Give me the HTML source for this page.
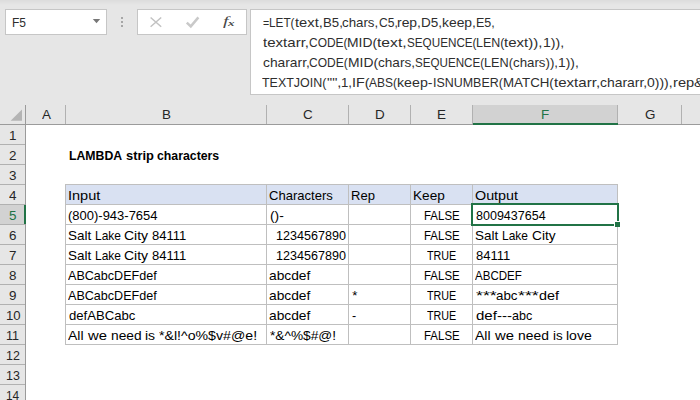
<!DOCTYPE html>
<html><head><meta charset="utf-8"><title>LAMBDA strip characters</title>
<style>
html,body{margin:0;padding:0}
body{width:700px;height:400px;overflow:hidden;background:#fff;position:relative;font-family:"Liberation Sans",sans-serif}
.a{position:absolute}
.t{position:absolute;white-space:pre;line-height:19px;height:19px;transform-origin:0 0;display:block}
.b{font-weight:bold}
.box{background:#fff;border:1px solid #c6c6c6;box-sizing:border-box}
.vl{position:absolute;width:1px;background:#bfbfbf}
.hl{position:absolute;height:1px;background:#bfbfbf}
</style></head>
<body>
<div class='a' style='left:0;top:0;width:700px;height:125px;background:#e6e6e6'></div>
<div class='a' style='left:0;top:0;width:700px;height:5px;background:linear-gradient(#dcdcdc,#e6e6e6)'></div>
<div class='a box' style='left:5px;top:9px;width:102px;height:26px'></div>
<svg class='a' style='left:92px;top:18px' width='10' height='7' viewBox='0 0 10 7'><path d='M0.8 1 L8.2 1 L4.5 5.2 Z' fill='#777'/></svg>
<div class='a' style='left:121px;top:17px;width:2px;height:2px;background:#a6a6a6'></div>
<div class='a' style='left:121px;top:21px;width:2px;height:2px;background:#a6a6a6'></div>
<div class='a' style='left:121px;top:25px;width:2px;height:2px;background:#a6a6a6'></div>
<div class='a box' style='left:137px;top:9px;width:110px;height:26px'></div>
<svg class='a' style='left:148px;top:14px' width='90' height='18' viewBox='148 14 90 18'><path d='M150.6 17.5 L161.2 26.7 M161.2 17.5 L150.6 26.7' stroke='#c2c2c2' stroke-width='1.5' fill='none'/><path d='M186.8 22.6 L190.8 26.4 L198.4 17.4' stroke='#c9c9c9' stroke-width='2.5' fill='none'/></svg>
<span class='a' style='left:222.5px;top:11.2px;font-family:"Liberation Serif",serif;font-style:italic;font-size:12.5px;line-height:20px;color:#474747;transform:scaleX(1.6);transform-origin:0 0'>f</span>
<span class='a' style='left:227.6px;top:13.4px;font-family:"Liberation Serif",serif;font-style:italic;font-weight:bold;font-size:9px;line-height:20px;color:#4c4c4c;transform:scaleX(1.45);transform-origin:0 0'>x</span>
<div class='a' style='left:250px;top:9px;width:450px;height:86px;background:#fff;border:1px solid #c6c6c6;border-right:0;box-sizing:border-box'></div>
<div class='a' style='left:0;top:125px;width:25px;height:275px;background:#e6e6e6'></div>
<div class='a' style='left:473px;top:105px;width:145px;height:20px;background:#d2d2d2'></div>
<div class='a' style='left:0;top:205px;width:25px;height:19px;background:#d2d2d2'></div>
<div class='a' style='left:0;top:124px;width:700px;height:1px;background:#9b9b9b'></div>
<div class='a' style='left:25px;top:105px;width:1px;height:295px;background:#9b9b9b'></div>
<div class='a' style='left:65px;top:105px;width:1px;height:19px;background:#b1b1b1'></div>
<div class='a' style='left:266px;top:105px;width:1px;height:19px;background:#b1b1b1'></div>
<div class='a' style='left:348px;top:105px;width:1px;height:19px;background:#b1b1b1'></div>
<div class='a' style='left:410px;top:105px;width:1px;height:19px;background:#b1b1b1'></div>
<div class='a' style='left:472px;top:105px;width:1px;height:19px;background:#b1b1b1'></div>
<div class='a' style='left:617px;top:105px;width:1px;height:19px;background:#b1b1b1'></div>
<div class='a' style='left:681px;top:105px;width:1px;height:19px;background:#b1b1b1'></div>
<div class='a' style='left:0;top:144px;width:25px;height:1px;background:#b1b1b1'></div>
<div class='a' style='left:0;top:164px;width:25px;height:1px;background:#b1b1b1'></div>
<div class='a' style='left:0;top:184px;width:25px;height:1px;background:#b1b1b1'></div>
<div class='a' style='left:0;top:204px;width:25px;height:1px;background:#b1b1b1'></div>
<div class='a' style='left:0;top:224px;width:25px;height:1px;background:#b1b1b1'></div>
<div class='a' style='left:0;top:244px;width:25px;height:1px;background:#b1b1b1'></div>
<div class='a' style='left:0;top:264px;width:25px;height:1px;background:#b1b1b1'></div>
<div class='a' style='left:0;top:284px;width:25px;height:1px;background:#b1b1b1'></div>
<div class='a' style='left:0;top:304px;width:25px;height:1px;background:#b1b1b1'></div>
<div class='a' style='left:0;top:324px;width:25px;height:1px;background:#b1b1b1'></div>
<div class='a' style='left:0;top:344px;width:25px;height:1px;background:#b1b1b1'></div>
<div class='a' style='left:0;top:364px;width:25px;height:1px;background:#b1b1b1'></div>
<div class='a' style='left:0;top:384px;width:25px;height:1px;background:#b1b1b1'></div>
<div class='a' style='left:0;top:404px;width:25px;height:1px;background:#b1b1b1'></div>
<svg class='a' style='left:9px;top:108px' width='14' height='14' viewBox='9 108 14 14'><path d='M22 109.4 L22 120.7 L10.6 120.7 Z' fill='#b4b4b4'/></svg>
<div class='a' style='left:473px;top:123px;width:145px;height:2px;background:#217346'></div>
<div class='a' style='left:24px;top:205px;width:2px;height:19px;background:#217346'></div>
<div class='a' style='left:66px;top:185px;width:551px;height:19px;background:#d9e1f2'></div>
<div class='vl' style='left:65px;top:184px;height:161px'></div>
<div class='vl' style='left:266px;top:184px;height:161px'></div>
<div class='vl' style='left:348px;top:184px;height:161px'></div>
<div class='vl' style='left:410px;top:184px;height:161px'></div>
<div class='vl' style='left:472px;top:184px;height:161px'></div>
<div class='vl' style='left:617px;top:184px;height:161px'></div>
<div class='hl' style='left:65px;top:184px;width:553px'></div>
<div class='hl' style='left:65px;top:204px;width:553px'></div>
<div class='hl' style='left:65px;top:224px;width:553px'></div>
<div class='hl' style='left:65px;top:244px;width:553px'></div>
<div class='hl' style='left:65px;top:264px;width:553px'></div>
<div class='hl' style='left:65px;top:284px;width:553px'></div>
<div class='hl' style='left:65px;top:304px;width:553px'></div>
<div class='hl' style='left:65px;top:324px;width:553px'></div>
<div class='hl' style='left:65px;top:344px;width:553px'></div>
<div class='a' style='left:471px;top:203px;width:148px;height:23px;border:2px solid #217346;box-sizing:border-box'></div>
<div class='a' style='left:614px;top:221px;width:6px;height:6px;background:#fff'></div>
<div class='a' style='left:615px;top:222px;width:5px;height:5px;background:#217346'></div>
<span class='t' style='left:41.70px;top:105px;font-size:13.4px;color:#262626;transform:scaleX(1.002)'>A</span>
<span class='t' style='left:161.70px;top:105px;font-size:13.4px;color:#262626;transform:scaleX(1.002)'>B</span>
<span class='t' style='left:303.20px;top:105px;font-size:13.4px;color:#262626;transform:scaleX(1.002)'>C</span>
<span class='t' style='left:374.70px;top:105px;font-size:13.4px;color:#262626;transform:scaleX(1.002)'>D</span>
<span class='t' style='left:437.20px;top:105px;font-size:13.4px;color:#262626;transform:scaleX(1.002)'>E</span>
<span class='t' style='left:541.20px;top:105px;font-size:13.4px;color:#217346;transform:scaleX(1.002)'>F</span>
<span class='t' style='left:645.20px;top:105px;font-size:13.4px;color:#262626;transform:scaleX(1.002)'>G</span>
<span class='t' style='left:8.60px;top:126px;font-size:13.4px;color:#262626;transform:scaleX(1.002)'>1</span>
<span class='t' style='left:9.10px;top:146px;font-size:13.4px;color:#262626;transform:scaleX(1.002)'>2</span>
<span class='t' style='left:9.10px;top:166px;font-size:13.4px;color:#262626;transform:scaleX(1.002)'>3</span>
<span class='t' style='left:8.60px;top:186px;font-size:13.4px;color:#262626;transform:scaleX(1.002)'>4</span>
<span class='t' style='left:9.10px;top:206px;font-size:13.4px;color:#217346;transform:scaleX(1.002)'>5</span>
<span class='t' style='left:9.10px;top:226px;font-size:13.4px;color:#262626;transform:scaleX(1.002)'>6</span>
<span class='t' style='left:9.10px;top:246px;font-size:13.4px;color:#262626;transform:scaleX(1.002)'>7</span>
<span class='t' style='left:9.10px;top:266px;font-size:13.4px;color:#262626;transform:scaleX(1.002)'>8</span>
<span class='t' style='left:9.10px;top:286px;font-size:13.4px;color:#262626;transform:scaleX(1.002)'>9</span>
<span class='t' style='left:5.82px;top:306px;font-size:13.4px;color:#262626;transform:scaleX(0.9816)'>10</span>
<span class='t' style='left:5.86px;top:326px;font-size:13.4px;color:#262626;transform:scaleX(0.9396)'>11</span>
<span class='t' style='left:5.87px;top:346px;font-size:13.4px;color:#262626;transform:scaleX(0.9296)'>12</span>
<span class='t' style='left:5.87px;top:366px;font-size:13.4px;color:#262626;transform:scaleX(0.9296)'>13</span>
<span class='t' style='left:5.91px;top:386px;font-size:13.4px;color:#262626;transform:scaleX(0.8860)'>14</span>
<span class='t b' style='left:69.00px;top:146px;font-size:13.2px;color:#000;transform:scaleX(0.9309)'>LAMBDA </span>
<span class='t b' style='left:125.60px;top:146px;font-size:13.2px;color:#000;transform:scaleX(0.9770)'>strip </span>
<span class='t b' style='left:157.10px;top:146px;font-size:13.2px;color:#000;transform:scaleX(0.9325)'>characters</span>
<span class='t' style='left:67.90px;top:186px;font-size:13.2px;color:#000;transform:scaleX(1.1023)'>Input</span>
<span class='t' style='left:68.40px;top:206px;font-size:13.2px;color:#000;transform:scaleX(0.9848)'>(800)-943-7654</span>
<span class='t' style='left:68.00px;top:226px;font-size:13.2px;color:#000;transform:scaleX(1.0224)'>Salt </span>
<span class='t' style='left:95.09px;top:226px;font-size:13.2px;color:#000;transform:scaleX(0.9085)'>Lake </span>
<span class='t' style='left:124.40px;top:226px;font-size:13.2px;color:#000;transform:scaleX(1.0616)'>City </span>
<span class='t' style='left:152.40px;top:226px;font-size:13.2px;color:#000;transform:scaleX(0.9890)'>84111</span>
<span class='t' style='left:68.00px;top:246px;font-size:13.2px;color:#000;transform:scaleX(1.0224)'>Salt </span>
<span class='t' style='left:95.09px;top:246px;font-size:13.2px;color:#000;transform:scaleX(0.9085)'>Lake </span>
<span class='t' style='left:124.40px;top:246px;font-size:13.2px;color:#000;transform:scaleX(1.0616)'>City </span>
<span class='t' style='left:152.40px;top:246px;font-size:13.2px;color:#000;transform:scaleX(0.9890)'>84111</span>
<span class='t' style='left:68.30px;top:266px;font-size:13.2px;color:#000;transform:scaleX(0.9527)'>ABCabcDEFdef</span>
<span class='t' style='left:68.30px;top:286px;font-size:13.2px;color:#000;transform:scaleX(0.9527)'>ABCabcDEFdef</span>
<span class='t' style='left:68.60px;top:306px;font-size:13.2px;color:#000;transform:scaleX(0.9953)'>defABCabc</span>
<span class='t' style='left:68.00px;top:326px;font-size:13.2px;color:#000;transform:scaleX(1.0624)'>All </span>
<span class='t' style='left:87.52px;top:326px;font-size:13.2px;color:#000;transform:scaleX(1.1244)'>we </span>
<span class='t' style='left:110.60px;top:326px;font-size:13.2px;color:#000;transform:scaleX(1.0424)'>need </span>
<span class='t' style='left:145.00px;top:326px;font-size:13.2px;color:#000;transform:scaleX(1.0616)'>is </span>
<span class='t' style='left:159.00px;top:326px;font-size:13.2px;color:#000;transform:scaleX(1.0732)'>*&amp;l!^o%$v#@e!</span>
<span class='t' style='left:269.40px;top:186px;font-size:13.2px;color:#000;transform:scaleX(0.9892)'>Characters</span>
<span class='t' style='left:270.00px;top:206px;font-size:13.2px;color:#000;transform:scaleX(1.0483)'>()-</span>
<span class='t' style='left:276.05px;top:226px;font-size:13.2px;color:#000;transform:scaleX(0.9527)'>1234567890</span>
<span class='t' style='left:276.05px;top:246px;font-size:13.2px;color:#000;transform:scaleX(0.9527)'>1234567890</span>
<span class='t' style='left:269.00px;top:266px;font-size:13.2px;color:#000;transform:scaleX(1.0443)'>abcdef</span>
<span class='t' style='left:269.00px;top:286px;font-size:13.2px;color:#000;transform:scaleX(1.0443)'>abcdef</span>
<span class='t' style='left:269.00px;top:306px;font-size:13.2px;color:#000;transform:scaleX(1.0443)'>abcdef</span>
<span class='t' style='left:270.10px;top:326px;font-size:13.2px;color:#000;transform:scaleX(1.0398)'>*&amp;^%$#@!</span>
<span class='t' style='left:351.01px;top:186px;font-size:13.2px;color:#000;transform:scaleX(0.9887)'>Rep</span>
<span class='t' style='left:352.30px;top:286px;font-size:13.2px;color:#000;transform:scaleX(1.0000)'>*</span>
<span class='t' style='left:351.70px;top:306px;font-size:13.2px;color:#000;transform:scaleX(0.9500)'>-</span>
<span class='t' style='left:412.97px;top:186px;font-size:13.2px;color:#000;transform:scaleX(1.0318)'>Keep</span>
<span class='t' style='left:424.13px;top:206px;font-size:13.2px;color:#000;transform:scaleX(0.8695)'>FALSE</span>
<span class='t' style='left:424.13px;top:226px;font-size:13.2px;color:#000;transform:scaleX(0.8695)'>FALSE</span>
<span class='t' style='left:426.60px;top:246px;font-size:13.2px;color:#000;transform:scaleX(0.8143)'>TRUE</span>
<span class='t' style='left:424.13px;top:266px;font-size:13.2px;color:#000;transform:scaleX(0.8695)'>FALSE</span>
<span class='t' style='left:426.60px;top:286px;font-size:13.2px;color:#000;transform:scaleX(0.8143)'>TRUE</span>
<span class='t' style='left:426.60px;top:306px;font-size:13.2px;color:#000;transform:scaleX(0.8143)'>TRUE</span>
<span class='t' style='left:424.13px;top:326px;font-size:13.2px;color:#000;transform:scaleX(0.8695)'>FALSE</span>
<span class='t' style='left:475.30px;top:186px;font-size:13.2px;color:#000;transform:scaleX(1.0871)'>Output</span>
<span class='t' style='left:475.70px;top:206px;font-size:13.2px;color:#000;transform:scaleX(0.9492)'>8009437654</span>
<span class='t' style='left:475.30px;top:226px;font-size:13.2px;color:#000;transform:scaleX(1.0224)'>Salt </span>
<span class='t' style='left:502.39px;top:226px;font-size:13.2px;color:#000;transform:scaleX(0.9085)'>Lake </span>
<span class='t' style='left:531.70px;top:226px;font-size:13.2px;color:#000;transform:scaleX(1.0382)'>City</span>
<span class='t' style='left:475.70px;top:246px;font-size:13.2px;color:#000;transform:scaleX(0.9861)'>84111</span>
<span class='t' style='left:475.30px;top:266px;font-size:13.2px;color:#000;transform:scaleX(0.8758)'>ABCDEF</span>
<span class='t' style='left:475.70px;top:286px;font-size:13.2px;color:#000;transform:scaleX(1.3445)'>***</span>
<span class='t' style='left:496.40px;top:286px;font-size:13.2px;color:#000;transform:scaleX(1.0112)'>abc</span>
<span class='t' style='left:517.90px;top:286px;font-size:13.2px;color:#000;transform:scaleX(1.3445)'>***</span>
<span class='t' style='left:538.60px;top:286px;font-size:13.2px;color:#000;transform:scaleX(1.0874)'>def</span>
<span class='t' style='left:475.70px;top:306px;font-size:13.2px;color:#000;transform:scaleX(1.1401)'>def</span>
<span class='t' style='left:496.60px;top:306px;font-size:13.2px;color:#000;transform:scaleX(1.1386)'>---</span>
<span class='t' style='left:511.60px;top:306px;font-size:13.2px;color:#000;transform:scaleX(0.9507)'>abc</span>
<span class='t' style='left:475.30px;top:326px;font-size:13.2px;color:#000;transform:scaleX(1.0624)'>All </span>
<span class='t' style='left:494.82px;top:326px;font-size:13.2px;color:#000;transform:scaleX(1.1244)'>we </span>
<span class='t' style='left:517.90px;top:326px;font-size:13.2px;color:#000;transform:scaleX(1.0515)'>need </span>
<span class='t' style='left:552.60px;top:326px;font-size:13.2px;color:#000;transform:scaleX(1.0161)'>is </span>
<span class='t' style='left:566.00px;top:326px;font-size:13.2px;color:#000;transform:scaleX(1.0646)'>love</span>
<span class='t' style='left:11.79px;top:13px;font-size:13.2px;color:#2e2e2e;transform:scaleX(0.9107)'>F5</span>
<span class='t' style='left:263.00px;top:13px;font-size:13.2px;color:#2e2e2e;transform:scaleX(0.8045)'>=</span>
<span class='t' style='left:269.11px;top:13px;font-size:13.2px;color:#2e2e2e;transform:scaleX(0.8920)'>LET(</span>
<span class='t' style='left:294.60px;top:13px;font-size:13.2px;color:#2e2e2e;transform:scaleX(1.1188)'>text,</span>
<span class='t' style='left:322.60px;top:13px;font-size:13.2px;color:#2e2e2e;transform:scaleX(1.0003)'>B5,</span>
<span class='t' style='left:342.40px;top:13px;font-size:13.2px;color:#2e2e2e;transform:scaleX(1.0080)'>chars,</span>
<span class='t' style='left:378.60px;top:13px;font-size:13.2px;color:#2e2e2e;transform:scaleX(0.9161)'>C5,</span>
<span class='t' style='left:397.40px;top:13px;font-size:13.2px;color:#2e2e2e;transform:scaleX(1.0538)'>rep,</span>
<span class='t' style='left:421.38px;top:13px;font-size:13.2px;color:#2e2e2e;transform:scaleX(1.0245)'>D5,</span>
<span class='t' style='left:442.40px;top:13px;font-size:13.2px;color:#2e2e2e;transform:scaleX(1.0523)'>keep,</span>
<span class='t' style='left:476.45px;top:13px;font-size:13.2px;color:#2e2e2e;transform:scaleX(0.9487)'>E5,</span>
<span class='t' style='left:262.60px;top:33px;font-size:13.2px;color:#2e2e2e;transform:scaleX(1.1412)'>textarr,</span>
<span class='t' style='left:308.60px;top:33px;font-size:13.2px;color:#2e2e2e;transform:scaleX(0.9059)'>CODE(</span>
<span class='t' style='left:346.95px;top:33px;font-size:13.2px;color:#2e2e2e;transform:scaleX(1.0521)'>MID(</span>
<span class='t' style='left:377.00px;top:33px;font-size:13.2px;color:#2e2e2e;transform:scaleX(1.1878)'>text,</span>
<span class='t' style='left:406.60px;top:33px;font-size:13.2px;color:#2e2e2e;transform:scaleX(0.8866)'>SEQUENCE(</span>
<span class='t' style='left:476.06px;top:33px;font-size:13.2px;color:#2e2e2e;transform:scaleX(0.9434)'>LEN(</span>
<span class='t' style='left:504.40px;top:33px;font-size:13.2px;color:#2e2e2e;transform:scaleX(1.1411)'>text)),</span>
<span class='t' style='left:542.93px;top:33px;font-size:13.2px;color:#2e2e2e;transform:scaleX(1.0708)'>1)),</span>
<span class='t' style='left:262.60px;top:53px;font-size:13.2px;color:#2e2e2e;transform:scaleX(1.0468)'>chararr,</span>
<span class='t' style='left:309.40px;top:53px;font-size:13.2px;color:#2e2e2e;transform:scaleX(0.9105)'>CODE(</span>
<span class='t' style='left:347.95px;top:53px;font-size:13.2px;color:#2e2e2e;transform:scaleX(1.0521)'>MID(</span>
<span class='t' style='left:378.00px;top:53px;font-size:13.2px;color:#2e2e2e;transform:scaleX(1.0303)'>chars,</span>
<span class='t' style='left:415.00px;top:53px;font-size:13.2px;color:#2e2e2e;transform:scaleX(0.8816)'>SEQUENCE(</span>
<span class='t' style='left:484.04px;top:53px;font-size:13.2px;color:#2e2e2e;transform:scaleX(0.9640)'>LEN(</span>
<span class='t' style='left:513.00px;top:53px;font-size:13.2px;color:#2e2e2e;transform:scaleX(1.0067)'>chars)),</span>
<span class='t' style='left:557.95px;top:53px;font-size:13.2px;color:#2e2e2e;transform:scaleX(1.0487)'>1)),</span>
<span class='t' style='left:262.20px;top:73px;font-size:13.2px;color:#2e2e2e;transform:scaleX(0.9452)'>TEXTJOIN(</span>
<span class='t' style='left:326.60px;top:73px;font-size:13.2px;color:#2e2e2e;transform:scaleX(1.0979)'>"",</span>
<span class='t' style='left:341.00px;top:73px;font-size:13.2px;color:#2e2e2e;transform:scaleX(1.0002)'>1,</span>
<span class='t' style='left:351.91px;top:73px;font-size:13.2px;color:#2e2e2e;transform:scaleX(1.0853)'>IF(</span>
<span class='t' style='left:369.40px;top:73px;font-size:13.2px;color:#2e2e2e;transform:scaleX(0.9097)'>ABS(</span>
<span class='t' style='left:397.40px;top:73px;font-size:13.2px;color:#2e2e2e;transform:scaleX(1.0768)'>keep-</span>
<span class='t' style='left:433.06px;top:73px;font-size:13.2px;color:#2e2e2e;transform:scaleX(0.9433)'>ISNUMBER(</span>
<span class='t' style='left:502.79px;top:73px;font-size:13.2px;color:#2e2e2e;transform:scaleX(1.0102)'>MATCH(</span>
<span class='t' style='left:553.60px;top:73px;font-size:13.2px;color:#2e2e2e;transform:scaleX(1.1437)'>textarr,</span>
<span class='t' style='left:599.70px;top:73px;font-size:13.2px;color:#2e2e2e;transform:scaleX(1.0558)'>chararr,</span>
<span class='t' style='left:646.90px;top:73px;font-size:13.2px;color:#2e2e2e;transform:scaleX(1.0590)'>0))),</span>
<span class='t' style='left:672.50px;top:73px;font-size:13.2px;color:#2e2e2e;transform:scaleX(1.1123)'>rep</span>
<span class='t' style='left:693.70px;top:73px;font-size:13.2px;color:#2e2e2e;transform:scaleX(1.1123)'>&amp;</span>
</body></html>
